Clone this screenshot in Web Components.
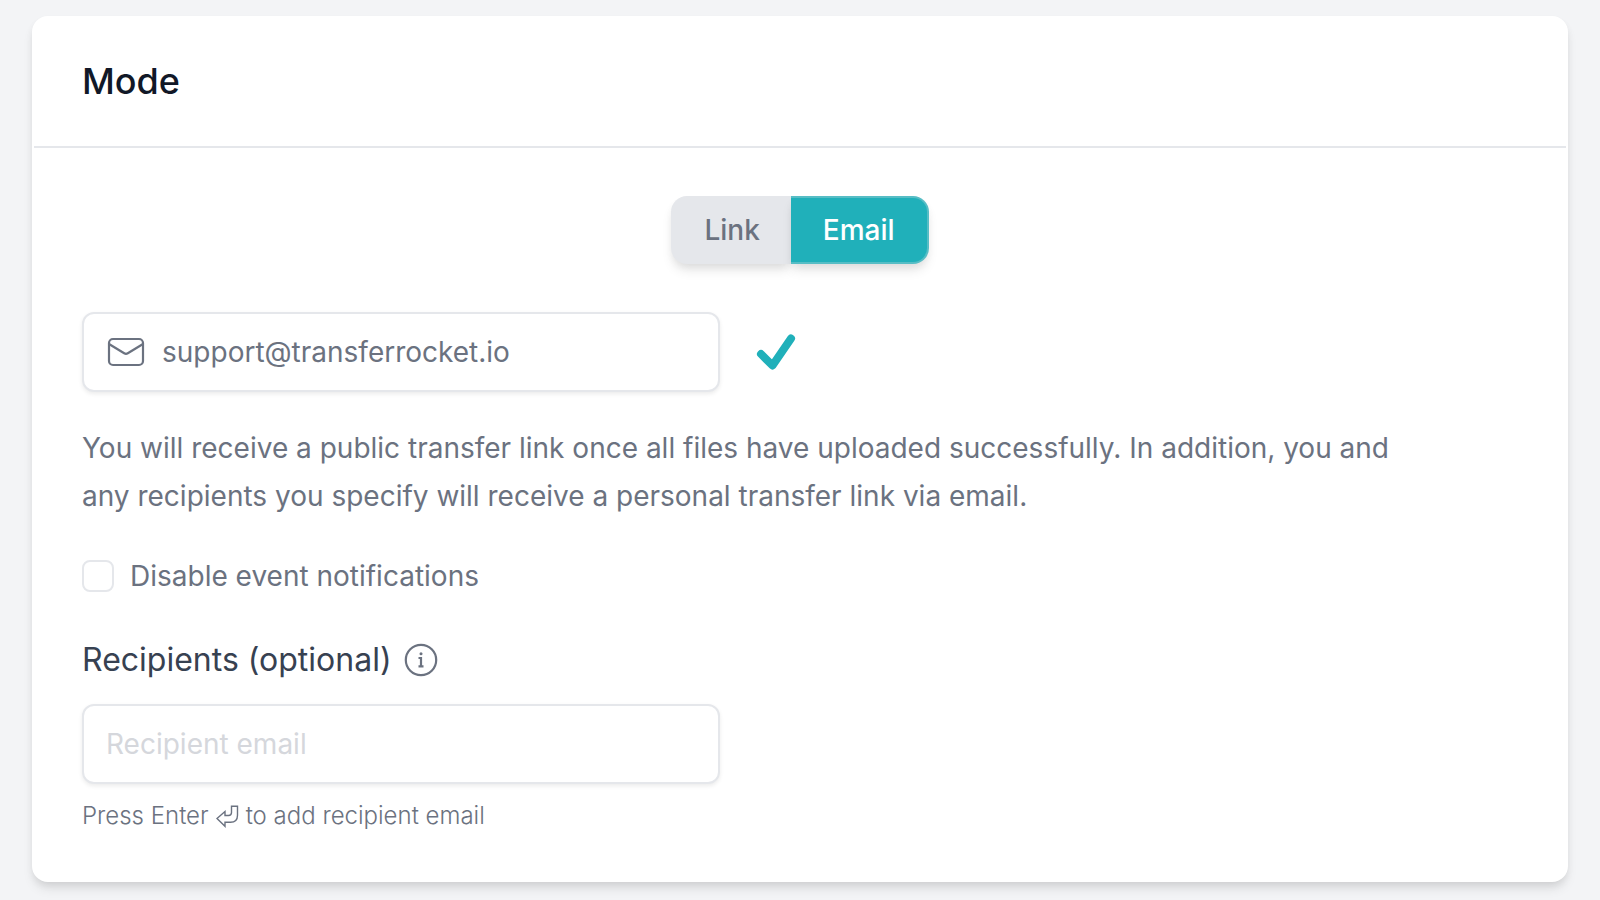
<!DOCTYPE html>
<html lang="en">
<head>
<meta charset="utf-8">
<meta name="viewport" content="width=device-width, initial-scale=1">
<title>Transfer mode</title>
<style>
body { margin: 0; background: #f3f4f6; font-family: Inter, "Liberation Sans", sans-serif; color: #6b7280; font-size: 28px; line-height: 48px; }
</style>
</head>
<body>
<mode-panel></mode-panel>

<script>
const define = (name, html, setup) => {
  const template = document.createElement('template');
  template.innerHTML = html;
  customElements.define(name, class extends HTMLElement {
    constructor() {
      super();
      this.attachShadow({ mode: 'open' }).append(template.content.cloneNode(true));
    }
    connectedCallback() { if (setup) setup(this, this.shadowRoot); }
  });
};

define('panel-card', `
<style>
:host { display: block; margin: 16px 32px; background: #fff; border: 2px solid #fff; border-radius: 16px; box-sizing: border-box;
  box-shadow: 0 8px 12px -2px rgb(0 0 0 / .1), 0 4px 8px -2px rgb(0 0 0 / .08); }
header { padding: 39px 48px 41px; border-bottom: 2px solid #e5e7eb; }
main { padding: 48px; }
</style>
<header><slot name="title"></slot></header>
<main><slot></slot></main>`);

define('mode-toggle', `
<style>
:host { display: flex; justify-content: center; }
div { display: flex; border-radius: 16px; }
button { font: inherit; font-weight: 500; line-height: 40px; padding: 12px 32px; margin: 0; border: 2px solid #e5e7eb; background: #e5e7eb; color: #6b7280;
  box-shadow: 0 8px 12px -2px rgb(0 0 0 / .1), 0 4px 8px -2px rgb(0 0 0 / .06); cursor: pointer; }
button:first-child { padding: 12px 31px; border-radius: 16px 0 0 16px; border-right: 0; }
button:last-child { border-radius: 0 16px 16px 0; border-left: 0; }
button[aria-pressed=true] { background: #20b0ba; color: #fff; border-color: #57bdc5; }
</style>
<div role="group" aria-label="Mode"><button type="button" aria-pressed="false">Link</button><button type="button" aria-pressed="true">Email</button></div>`,
(host, root) => {
  const buttons = root.querySelectorAll('button');
  buttons.forEach(b => b.onclick = () => buttons.forEach(o => o.setAttribute('aria-pressed', o === b)));
});

define('text-field', `
<style>
:host { display: block; width: 638px; max-width: 100%; }
div { display: flex; align-items: center; gap: 16px; box-sizing: border-box; height: 80px; padding: 0 22px; border: 2px solid #e5e7eb; border-radius: 12px;
  background: #fff; box-shadow: 0 2px 4px rgb(0 0 0 / .08); }
input { flex: 1; min-width: 0; font: inherit; line-height: 40px; color: #6b7280; border: 0; padding: 0; background: none; outline: 0; }
input::placeholder { color: #d5d7dc; opacity: 1; }
</style>
<div><slot name="icon"></slot><input></div>`,
(host, root) => {
  const input = root.querySelector('input');
  input.type = 'email';
  input.value = host.getAttribute('value') || '';
  input.placeholder = host.getAttribute('placeholder') || '';
  input.setAttribute('aria-label', host.getAttribute('label'));
});

define('check-option', `
<style>
:host { display: block; }
label { display: flex; align-items: center; gap: 16px; }
input { appearance: none; flex: none; box-sizing: border-box; width: 32px; height: 32px; margin: 0; border: 2px solid #e5e7eb; border-radius: 8px; background: #fff; }
input:checked { background: #20b0ba; }
</style>
<label><input type="checkbox"><slot></slot></label>`);

const icons = {
  mail: `<svg width="40" height="40" viewBox="0 0 40 40" fill="none" stroke="#6b7280" stroke-width="2.200"><rect x="3" y="7" width="34" height="26" rx="4"/><path d="M3 12l15.2 9.3q1.8 1.1 3.6 0L37 12"/></svg>`,
  check: `<svg width="40" height="40" viewBox="0 0 40 40" fill="none" stroke="#20b0ba" stroke-width="8" stroke-linecap="round" stroke-linejoin="round"><path d="M5 22l11.500 11.500L35 6.500"/></svg>`,
  info: `<svg width="34" height="34" viewBox="0 0 34 34" fill="none" stroke="#6b7280" stroke-width="2.200"><circle cx="17" cy="17" r="15.200"/><circle cx="17" cy="10.800" r="1.500" fill="#6b7280" stroke="none"/><path d="M14.500 15h2.500v8.300M14.500 23.300h5"/></svg>`,
  enter: `<svg width="23" height="23" viewBox="0 0 23 23" fill="none" stroke="#6b7280" stroke-width="1.400"><path d="M1 13.500L9 6.500v4h3.500q3 0 3-3V1.200h6v9q0 7-7 7H9v4.100z"/></svg>`
};
define('line-icon', `<style>:host { display: inline-flex; flex: none; } svg { display: block; }</style><span aria-hidden="true"></span>`,
(host, root) => { root.querySelector('span').innerHTML = icons[host.getAttribute('name')]; });

define('mode-panel', `
<style>
:host { display: block; }
h2 { margin: 0; font-size: 36px; line-height: 48px; font-weight: 500; color: #111827; }
h3 { margin: 0; font-size: 32px; line-height: 48px; font-weight: 400; color: #374151; }
p { margin: 0; }
.sender, .heading { display: flex; align-items: center; }
.sender { gap: 36px; margin-top: 48px; }
.note { margin-top: 32px; max-width: 1340px; }
check-option { margin-top: 32px; }
.heading { gap: 12px; margin-top: 36px; margin-bottom: 20px; }
.hint { display: flex; align-items: center; gap: 7px; margin-top: 16px; font-size: 24px; line-height: 32px; font-weight: 300; }
</style>
<panel-card>
  <h2 slot="title">Mode</h2>
  <mode-toggle></mode-toggle>
  <div class="sender">
    <text-field label="Your email" value="support@transferrocket.io"><line-icon slot="icon" name="mail"></line-icon></text-field>
    <line-icon name="check"></line-icon>
  </div>
  <p class="note">You will receive a public transfer link once all files have uploaded successfully. In addition, you and any recipients you specify will receive a personal transfer link via email.</p>
  <check-option>Disable event notifications</check-option>
  <div class="heading"><h3>Recipients (optional)</h3><line-icon name="info"></line-icon></div>
  <text-field label="Recipients (optional)" placeholder="Recipient email"></text-field>
  <p class="hint"><span>Press Enter</span><line-icon name="enter"></line-icon><span>to add recipient email</span></p>
</panel-card>`);
</script>
</body>
</html>
